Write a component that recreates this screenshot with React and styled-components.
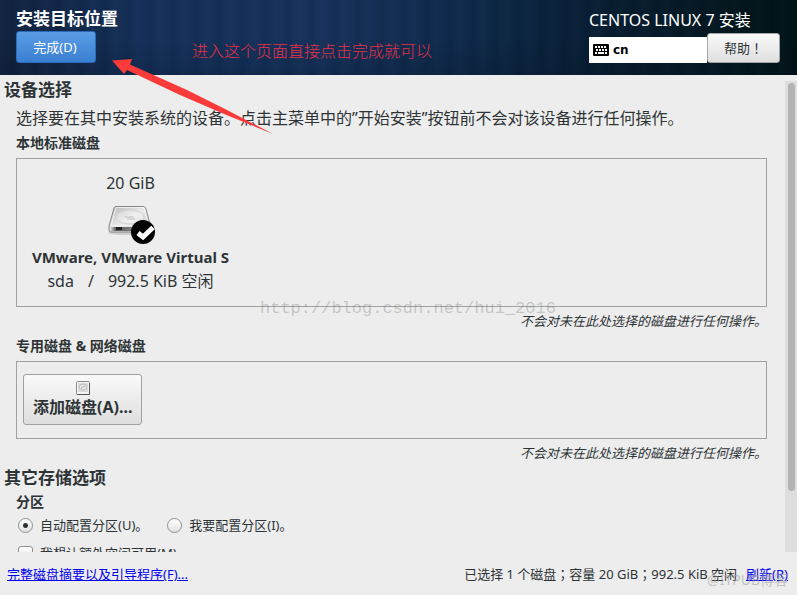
import { useState } from "react";
import styled, { createGlobalStyle } from "styled-components";

//Drawing of the hard disk, used for the selected device:
const DiskIcon = () => (
    <svg width="52" height="40" viewBox="0 0 52 40" aria-hidden="true">
        <defs>
            <linearGradient id="diskTop" x1="0" y1="0" x2="1" y2="1">
                <stop offset="0" stopColor="#b4b4b4" />
                <stop offset="0.5" stopColor="#ececec" />
                <stop offset="1" stopColor="#c0c0c0" />
            </linearGradient>
            <linearGradient id="diskFront" x1="0" y1="0" x2="1" y2="0">
                <stop offset="0" stopColor="#e4e4e4" />
                <stop offset="0.15" stopColor="#5b5b5b" />
                <stop offset="0.5" stopColor="#7c7c7c" />
                <stop offset="1" stopColor="#b5b5b5" />
            </linearGradient>
        </defs>
        <ellipse cx="24" cy="28" rx="21" ry="2" fill="#cfcfcf" />
        <path d="M11 1.5 H38 Q40 1.5 40.6 3 L45.5 21 V25 Q45.5 27 44 27 H6 Q4 27 4 25 V21 L9 3 Q9.500 1.5 11 1.5 Z" fill="url(#diskTop)" stroke="#858585" />
        <path d="M5 22 H45 V25 Q45 26 44 26 H6 Q5 26 5 25 Z" fill="url(#diskFront)" />
        <path d="M11 2.5 H39 L44 20.5 H6 Z" fill="none" stroke="#f6f6f6" strokeWidth="0.8" />
        <ellipse cx="25" cy="12" rx="14" ry="7" fill="#fff" fillOpacity="0.25" stroke="#d2d2d2" />
        <path d="M20 12 H29 M22 14 H30" stroke="#bdbdbd" />
        <path d="M8 20.500 H44" stroke="#f2f2f2" />
        <rect x="11" y="22" width="6" height="3" fill="#222" />
        <circle cx="38" cy="27" r="12" fill="#000" />
        <path d="M33 28 L38 32 L48 22.500" fill="none" stroke="#fff" strokeWidth="5" />
    </svg>
);

const SmallDiskIcon = () => (
    <svg width="14" height="14" viewBox="0 0 14 14" aria-hidden="true">
        <rect x="0.5" y="0.5" width="13" height="13" rx="1" fill="#f4f4f4" stroke="#8a8a8a" />
        <rect x="2" y="2" width="10" height="9" fill="#dcdcdc" />
        <ellipse cx="7" cy="6" rx="4" ry="3" fill="#e8e8e8" stroke="#bdbdbd" />
        <path d="M5 7 L9 5" stroke="#b0b0b0" />
        <path d="M1 13.500 H13.500 V2" fill="none" stroke="#555" />
    </svg>
);

const KeyboardIcon = () => (
    <svg width="16" height="12" viewBox="0 0 16 12" aria-hidden="true">
        <rect width="16" height="12" rx="1" fill="#000" />
        <path d="M2 3 H14" stroke="#fff" strokeWidth="2" strokeDasharray="2 1" />
        <path d="M3 6 H14" stroke="#fff" strokeWidth="2" strokeDasharray="2 1" />
        <path d="M2 9 H4 M5 9 H11 M12 9 H14" stroke="#fff" strokeWidth="2" />
    </svg>
);

const App = () => {

    const [partitioning, setPartitioning] = useState("auto");
    const [extraSpace, setExtraSpace] = useState(false);

    return (
        <Page>
            <GlobalStyle />
            <Header>
                <HeaderLeft>
                    <PageTitle>安装目标位置</PageTitle>
                    <DoneButton type="button">完成(D)</DoneButton>
                </HeaderLeft>
                <HeaderRight>
                    <ProductName>CENTOS LINUX 7 安装</ProductName>
                    <HeaderTools>
                        <LayoutButton type="button"><KeyboardIcon />cn</LayoutButton>
                        <HelpButton type="button">帮助！</HelpButton>
                    </HeaderTools>
                </HeaderRight>
            </Header>
            <Body>
                <Content>
                    <SectionTitle>设备选择</SectionTitle>
                    <Group>
                        <Description>选择要在其中安装系统的设备。点击主菜单中的”开始安装”按钮前不会对该设备进行任何操作。</Description>
                        <GroupTitle>本地标准磁盘</GroupTitle>
                        <DiskBox $padding="12px">
                            <Disk>
                                <DiskText>20 GiB</DiskText>
                                <DiskIcon />
                                <DiskName>VMware, VMware Virtual S</DiskName>
                                <DiskDetails>
                                    <span>sda</span>
                                    <span>/</span>
                                    <span>992.5 KiB 空闲</span>
                                </DiskDetails>
                            </Disk>
                        </DiskBox>
                        <Note>不会对未在此处选择的磁盘进行任何操作。</Note>
                    </Group>
                    <Group $gap="6px">
                        <GroupTitle>专用磁盘 &amp; 网络磁盘</GroupTitle>
                        <DiskBox $padding="12px 6px 13px">
                            <AddButton type="button"><SmallDiskIcon />添加磁盘(A)...</AddButton>
                        </DiskBox>
                        <Note>不会对未在此处选择的磁盘进行任何操作。</Note>
                    </Group>
                    <SectionTitle>其它存储选项</SectionTitle>
                    <Group $gap="3px">
                        <GroupTitle $tight>分区</GroupTitle>
                        <OptionRow>
                            <Option>
                                <Radio name="partitioning" checked={partitioning === "auto"} onChange={() => setPartitioning("auto")} />
                                自动配置分区(U)。
                            </Option>
                            <Option>
                                <Radio name="partitioning" checked={partitioning === "manual"} onChange={() => setPartitioning("manual")} />
                                我要配置分区(I)。
                            </Option>
                        </OptionRow>
                        <OptionRow>
                            <Option>
                                <Checkbox checked={extraSpace} onChange={() => setExtraSpace(!extraSpace)} />
                                我想让额外空间可用(M)。
                            </Option>
                        </OptionRow>
                    </Group>
                </Content>
                <ScrollTrack>
                    <ScrollThumb />
                </ScrollTrack>
            </Body>
            <Footer>
                <FooterLink href="#summary">完整磁盘摘要以及引导程序(F)...</FooterLink>
                <FooterStatus>
                    <StatusText>已选择 1 个磁盘；容量 20 GiB；992.5 KiB 空闲</StatusText>
                    <FooterLink href="#refresh">刷新(R)</FooterLink>
                </FooterStatus>
            </Footer>
            <Hint>进入这个页面直接点击完成就可以</Hint>
            <Arrow viewBox="0 0 162 78" aria-hidden="true">
                <path d="M0 2.500 L20 1 L18 6.500 L75 32 L115 52 L161 76 L112 56 L68 37 L15 12 L12 16 Z" fill="#fb3a3a" />
            </Arrow>
            <BlogMark>http://blog.csdn.net/hui_2016</BlogMark>
            <SiteMark>@ITPUB博客</SiteMark>
        </Page>
    );
};

export default App;

const GlobalStyle = createGlobalStyle`
    * {
        box-sizing: border-box;
    }
    body {
        margin: 0;
        background-color: #ededed;
        color: #2e3436;
        font-family: "Noto Sans", "Noto Sans CJK SC", sans-serif;
        font-size: 13px;
    }
    button {
        font-family: inherit;
        color: inherit;
        cursor: pointer;
    }
`;

const Page = styled.div`
    position: relative;
    display: flex;
    flex-direction: column;
    height: 100vh;
    overflow: hidden;
`;

const Header = styled.header`
    display: flex;
    justify-content: space-between;
    flex-shrink: 0;
    height: 75px;
    padding: 7px 17px 0 16px;
    color: #fff;
    background:
        linear-gradient(to bottom, transparent 50%, rgba(5, 15, 30, 0.2)),
        repeating-linear-gradient(to right, rgba(255, 255, 255, 0.01) 0, transparent 7px, rgba(0, 0, 0, 0.08) 13px, transparent 17px, rgba(255, 255, 255, 0.01) 23px),
        linear-gradient(to right, #11233f, #14305a 18%, #15325c 40%, #0f2a4b 58%, #081f35 74%, #04171f 92%, #021317);
`;

const HeaderLeft = styled.div`
    display: flex;
    flex-direction: column;
    align-items: flex-start;
`;

const PageTitle = styled.h1`
    margin: 0;
    font-size: 17px;
    line-height: 24px;
`;

const DoneButton = styled.button`
    width: 80px;
    height: 32px;
    padding: 0 2px 2px 0;
    border: 1px solid #2a6cbb;
    border-radius: 3px;
    background: linear-gradient(to bottom, #5a9ce4, #3a80d2);
    && {
        color: #fff;
    }
    font-size: 13px;
`;

const HeaderRight = styled.div`
    display: flex;
    flex-direction: column;
    width: 191px;
`;

const ProductName = styled.div`
    font-size: 16px;
    line-height: 26px;
    white-space: nowrap;
`;

const HeaderTools = styled.div`
    display: flex;
    align-items: flex-end;
`;

const LayoutButton = styled.button`
    display: flex;
    align-items: center;
    gap: 4px;
    flex: 1;
    height: 26px;
    padding: 0 4px;
    border: none;
    background-color: #fff;
    && {
        color: #000;
    }
    font-family: "DejaVu Sans", sans-serif;
    font-size: 12px;
    font-weight: bold;
`;

const HelpButton = styled.button`
    width: 73px;
    height: 30px;
    padding: 0 0 2px;
    border: 1px solid #a4a6a6;
    border-radius: 3px;
    background: linear-gradient(to bottom, #fafafa, #dedede);
    && {
        color: #2e3436;
        font-family: "Noto Sans CJK TC", sans-serif;
    }
    font-size: 13px;
`;

const Body = styled.main`
    display: flex;
    flex: 1;
    min-height: 0;
    overflow: hidden;
`;

const Content = styled.div`
    flex: 1;
    padding-right: 18px;
`;

const SectionTitle = styled.h2`
    margin: 3px 0 0 4px;
    font-size: 17px;
    line-height: 24px;
`;

const Group = styled.section`
    margin-left: 16px;
    padding-top: ${props => props.$gap || "0"};
`;

const Description = styled.p`
    margin: 0;
    font-size: 16px;
    line-height: 32px;
    white-space: nowrap;
`;

const GroupTitle = styled.h3`
    margin: 0 0 ${props => props.$tight ? "4px" : "6px"};
    font-size: 14px;
    line-height: 18px;
`;

const DiskBox = styled.div`
    display: flex;
    padding: ${props => props.$padding};
    border: 1px solid #a1a1a1;
`;

const Disk = styled.div`
    display: flex;
    flex-direction: column;
    align-items: center;
    min-width: 203px;
    svg {
        margin-top: 10px;
    }
`;

const DiskText = styled.div`
    font-size: 16px;
    line-height: 24px;
`;

const DiskName = styled(DiskText)`
    font-size: 15px;
    font-weight: bold;
`;

const DiskDetails = styled(DiskText)`
    display: flex;
    gap: 14px;
    padding-bottom: 1px;
`;

const Note = styled.p`
    margin: 4px 0 0;
    font-size: 13px;
    font-style: italic;
    line-height: 20px;
    text-align: right;
`;

const AddButton = styled.button`
    display: flex;
    flex-direction: column;
    align-items: center;
    padding: 6px 9px 5px;
    border: 1px solid #a1a1a1;
    border-radius: 3px;
    background: linear-gradient(to bottom, #fafafa, #dedede);
    font-size: 16px;
    font-weight: bold;
    line-height: 24px;
`;

const OptionRow = styled.div`
    display: flex;
    gap: 17px;
    margin-bottom: 8px;
`;

const Option = styled.label`
    display: flex;
    align-items: center;
    gap: 7px;
    padding-left: 2px;
    line-height: 20px;
`;

const Radio = styled.input.attrs({ type: "radio" })`
    appearance: none;
    width: 15px;
    height: 15px;
    margin: 0;
    border: 1px solid #8f8f8f;
    border-radius: 50%;
    background: linear-gradient(to bottom, #fff, #e2e2e2);
    &:checked {
        background: radial-gradient(circle, #2e3436 0 2px, transparent 3px), linear-gradient(to bottom, #fff, #e2e2e2);
    }
`;

const Checkbox = styled.input.attrs({ type: "checkbox" })`
    appearance: none;
    width: 15px;
    height: 15px;
    margin: 0;
    border: 1px solid #8f8f8f;
    border-radius: 3px;
    background: linear-gradient(to bottom, #fff, #e2e2e2);
    &:checked {
        background: #2e3436;
    }
`;

const ScrollTrack = styled.div`
    width: 12px;
    margin-top: 6px;
    padding: 2px 2px 0 3px;
    background-color: #dedede;
`;

const ScrollThumb = styled.div`
    height: 87%;
    border-radius: 4px;
    background-color: #b3b3b3;
`;

const Footer = styled.footer`
    display: flex;
    justify-content: space-between;
    flex-shrink: 0;
    height: 43px;
    padding: 12px 9px 0 7px;
    line-height: 20px;
    white-space: nowrap;
`;

const FooterStatus = styled.div`
    display: flex;
    gap: 9px;
`;

const StatusText = styled.span`
    font-family: "Noto Sans", "Noto Sans CJK TC", sans-serif;
`;

const FooterLink = styled.a`
    color: #0000ee;
`;

//Notes and marks that lie over the page:
const Hint = styled.div`
    position: absolute;
    top: 38px;
    left: 192px;
    color: #e8304a;
    font-family: "Noto Sans CJK SC", sans-serif;
    font-size: 16px;
    font-weight: 300;
    line-height: 24px;
`;

const Arrow = styled.svg`
    position: absolute;
    top: 58px;
    left: 112px;
    width: 162px;
    height: 78px;
`;

const BlogMark = styled.div`
    position: absolute;
    top: 297px;
    left: 260px;
    color: rgba(120, 120, 120, 0.35);
    font-family: "Liberation Mono", monospace;
    font-size: 17px;
    line-height: 24px;
`;

const SiteMark = styled.div`
    position: absolute;
    right: 9px;
    bottom: 5px;
    color: rgba(160, 160, 160, 0.6);
    font-size: 14px;
    line-height: 20px;
`;
